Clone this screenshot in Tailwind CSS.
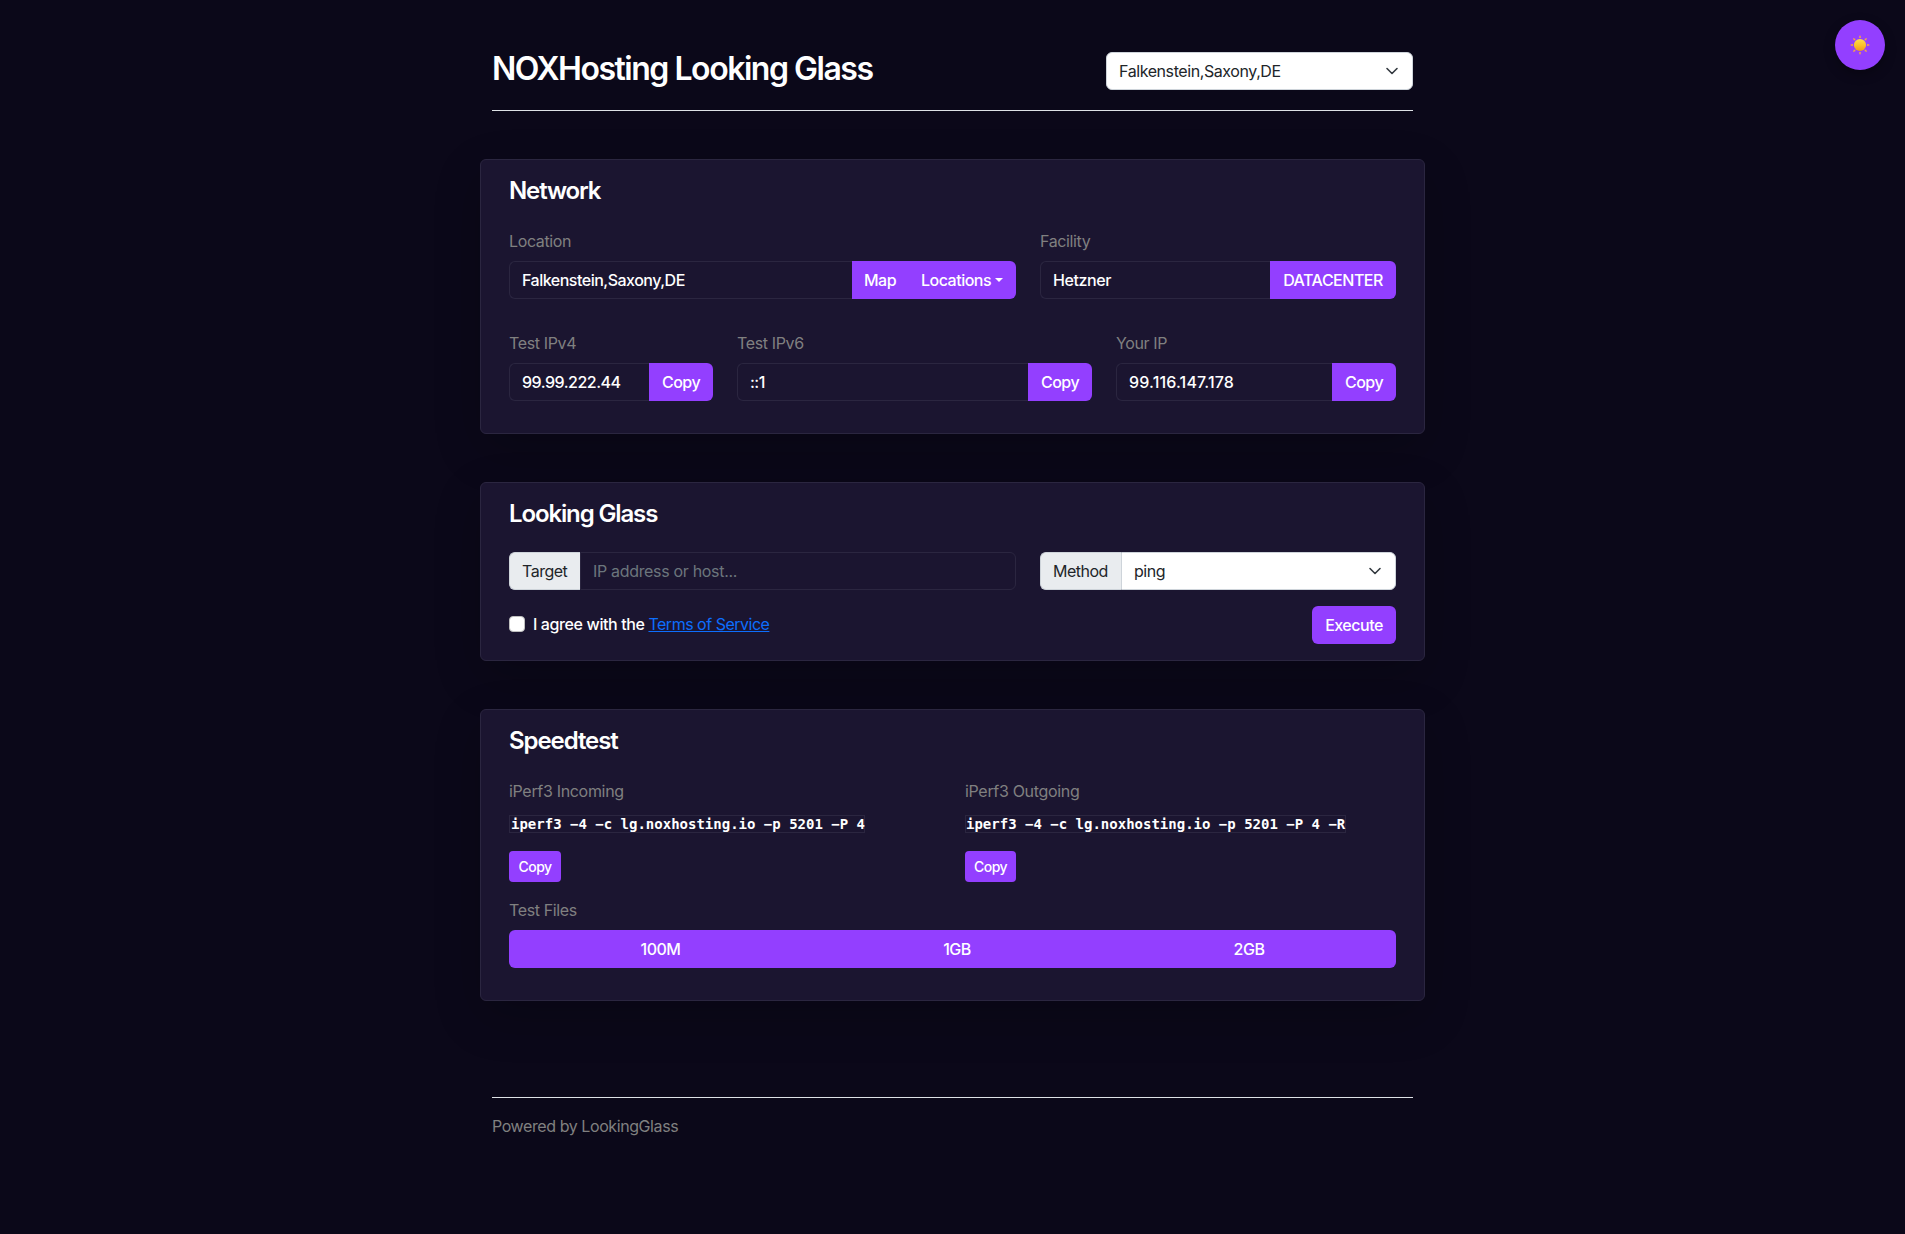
<!DOCTYPE html>
<html lang="en">
<head>
<meta charset="utf-8">
<title>NOXHosting Looking Glass</title>
<script src="https://cdn.jsdelivr.net/npm/@tailwindcss/browser@4"></script>
</head>
<body class="h-[1234px] overflow-hidden bg-[#0b0819] font-['Inter','Liberation_Sans',sans-serif] text-base font-medium tracking-[-0.031em] text-white">
<button class="absolute top-5 right-5 flex size-[50px] items-center justify-center rounded-full bg-[#933fff] shadow-[0_4px_12px_rgba(0,0,0,0.3)]" aria-label="Theme">
  <svg class="size-5" viewBox="0 0 20 20">
    <defs><linearGradient id="sun" x1="0" y1="0" x2="0" y2="1"><stop offset="0" stop-color="#ffe04a"/><stop offset=".55" stop-color="#fbc02a"/><stop offset="1" stop-color="#f09a1c"/></linearGradient></defs>
    <g fill="#fbab3c">
      <path d="M8.8 2.8 10 0l1.2 2.8z"/><path d="M8.8 2.8 10 0l1.2 2.8z" transform="rotate(45 10 10)"/><path d="M8.8 2.8 10 0l1.2 2.8z" transform="rotate(90 10 10)"/><path d="M8.8 2.8 10 0l1.2 2.8z" transform="rotate(135 10 10)"/><path d="M8.8 2.8 10 0l1.2 2.8z" transform="rotate(180 10 10)"/><path d="M8.8 2.8 10 0l1.2 2.8z" transform="rotate(225 10 10)"/><path d="M8.8 2.8 10 0l1.2 2.8z" transform="rotate(270 10 10)"/><path d="M8.8 2.8 10 0l1.2 2.8z" transform="rotate(315 10 10)"/>
    </g>
    <circle cx="10" cy="10" r="6.1" fill="url(#sun)"/>
  </svg>
</button>
<div class="mx-auto w-[945px]">
  <header class="mx-3 flex h-[111px] items-start justify-between border-b border-[#dee2e6] pt-12">
    <h1 class="mt-px text-[32px] leading-[39px] font-semibold tracking-[-0.046em] whitespace-nowrap">NOXHosting Looking Glass</h1>
    <div class="mt-1 flex h-[38px] w-[307px] items-center justify-between rounded-md border border-[#ced4da] bg-white px-3 font-normal tracking-[-0.026em] text-[#212529]">
      <span>Falkenstein,Saxony,DE</span>
      <svg class="size-4" viewBox="0 0 16 16" fill="none" stroke="#343a40" stroke-width="1.6" stroke-linecap="round" stroke-linejoin="round"><path d="m3 5.5 5 5 5-5"/></svg>
    </div>
  </header>

  <section class="mt-12 h-[275px] rounded-md border border-[#2b2640] bg-[#1b1530] px-7 pt-4 shadow-[0_16px_48px_rgba(0,0,0,0.2)]">
    <h2 class="text-2xl leading-[30px] font-semibold tracking-[-0.047em]">Network</h2>
    <div class="mt-[23px] flex gap-6">
      <div class="w-[507px]">
        <div class="mb-2 leading-6 font-normal tracking-[-0.023em] text-[#808080]">Location</div>
        <div class="flex h-[38px]">
          <div class="flex w-[343px] items-center rounded-l-md border border-r-0 border-[#2b2640] pl-3">Falkenstein,Saxony,DE</div>
          <button class="w-14 bg-[#933fff]">Map</button>
          <button class="flex flex-1 items-center rounded-r-md bg-[#933fff] pl-[13px]">Locations<span class="ml-1 border-x-4 border-t-4 border-x-transparent border-t-white"></span></button>
        </div>
      </div>
      <div class="w-[356px]">
        <div class="mb-2 leading-6 font-normal tracking-[-0.023em] text-[#808080]">Facility</div>
        <div class="flex h-[38px]">
          <div class="flex flex-1 items-center rounded-l-md border border-r-0 border-[#2b2640] pl-3 tracking-[-0.025em]">Hetzner</div>
          <button class="w-[126px] rounded-r-md bg-[#933fff]">DATACENTER</button>
        </div>
      </div>
    </div>
    <div class="mt-8 flex gap-6">
      <div class="w-[204px]">
        <div class="mb-2 leading-6 font-normal tracking-[-0.023em] text-[#808080]">Test IPv4</div>
        <div class="flex h-[38px]">
          <div class="flex flex-1 items-center rounded-l-md border border-r-0 border-[#2b2640] pl-3">99.99.222.44</div>
          <button class="w-16 rounded-r-md bg-[#933fff]">Copy</button>
        </div>
      </div>
      <div class="w-[355px]">
        <div class="mb-2 leading-6 font-normal tracking-[-0.023em] text-[#808080]">Test IPv6</div>
        <div class="flex h-[38px]">
          <div class="flex flex-1 items-center rounded-l-md border border-r-0 border-[#2b2640] pl-3">::1</div>
          <button class="w-16 rounded-r-md bg-[#933fff]">Copy</button>
        </div>
      </div>
      <div class="w-[280px]">
        <div class="mb-2 leading-6 font-normal tracking-[-0.023em] text-[#808080]">Your IP</div>
        <div class="flex h-[38px]">
          <div class="flex flex-1 items-center rounded-l-md border border-r-0 border-[#2b2640] pl-3 tracking-[0.01em]">99.116.147.178</div>
          <button class="w-16 rounded-r-md bg-[#933fff]">Copy</button>
        </div>
      </div>
    </div>
  </section>

  <section class="mt-12 h-[179px] rounded-md border border-[#2b2640] bg-[#1b1530] px-7 pt-4 shadow-[0_16px_48px_rgba(0,0,0,0.2)]">
    <h2 class="text-2xl leading-[30px] font-semibold tracking-[-0.047em]">Looking Glass</h2>
    <div class="mt-[23px] flex h-[38px] gap-6 font-normal">
      <div class="flex w-[507px]">
        <div class="flex w-[71px] items-center rounded-l-md border border-r-0 border-[#ced4da] bg-[#e9ecef] pl-3 text-[#212529]">Target</div>
        <div class="flex flex-1 items-center rounded-r-md border border-[#2b2640] pl-3 tracking-[-0.02em] text-[#6c757d]">IP address or host...</div>
      </div>
      <div class="flex w-[356px] text-[#212529]">
        <div class="flex w-[81px] items-center rounded-l-md border border-r-0 border-[#ced4da] bg-[#e9ecef] pl-3">Method</div>
        <div class="flex flex-1 items-center justify-between rounded-r-md border border-[#ced4da] bg-white px-3">
          <span>ping</span>
          <svg class="size-4" viewBox="0 0 16 16" fill="none" stroke="#343a40" stroke-width="1.6" stroke-linecap="round" stroke-linejoin="round"><path d="m3 5.5 5 5 5-5"/></svg>
        </div>
      </div>
    </div>
    <div class="mt-4 flex items-start justify-between">
      <div class="mt-1.5 flex items-center leading-6">
        <span class="mr-2 size-4 rounded border border-[#bfbfbf] bg-white"></span>
        <span class="tracking-[-0.024em] whitespace-pre">I agree with the </span><a class="font-normal text-[#0d6efd] underline">Terms of Service</a>
      </div>
      <button class="h-[38px] w-[84px] rounded-md bg-[#933fff]">Execute</button>
    </div>
  </section>

  <section class="mt-12 h-[292px] rounded-md border border-[#2b2640] bg-[#1b1530] px-7 pt-4 shadow-[0_16px_48px_rgba(0,0,0,0.2)]">
    <h2 class="text-2xl leading-[30px] font-semibold tracking-[-0.045em]">Speedtest</h2>
    <div class="mt-[23px] flex">
      <div class="w-[456px]">
        <div class="leading-6 font-normal tracking-[-0.02em] text-[#808080]">iPerf3 Incoming</div>
        <code class="mt-3 flex h-[18px] w-[356px] items-center border border-[#2b2640] pl-px font-['DejaVu_Sans_Mono',monospace] text-sm font-bold tracking-normal whitespace-pre">iperf3 −4 −c lg.noxhosting.io −p 5201 −P 4</code>
        <button class="mt-[18px] block h-[31px] w-[52px] rounded bg-[#933fff] text-sm">Copy</button>
      </div>
      <div>
        <div class="leading-6 font-normal tracking-[-0.02em] text-[#808080]">iPerf3 Outgoing</div>
        <code class="mt-3 flex h-[18px] w-[381px] items-center border border-[#2b2640] font-['DejaVu_Sans_Mono',monospace] text-sm font-bold tracking-normal whitespace-pre">iperf3 −4 −c lg.noxhosting.io −p 5201 −P 4 −R</code>
        <button class="mt-[18px] block h-[31px] w-[51px] rounded bg-[#933fff] text-sm">Copy</button>
      </div>
    </div>
    <div class="mt-4 mb-2 leading-6 font-normal tracking-[-0.023em] text-[#808080]">Test Files</div>
    <div class="flex h-[38px] overflow-hidden rounded-md bg-[#933fff]">
      <button class="w-[303px]">100M</button>
      <button class="w-[290px]">1GB</button>
      <button class="flex-1">2GB</button>
    </div>
  </section>

  <footer class="mx-3 mt-24 border-t border-[#dee2e6] pt-4 leading-6 font-normal tracking-[-0.026em] text-[#808080]">Powered by LookingGlass</footer>
</div>
</body>
</html>
